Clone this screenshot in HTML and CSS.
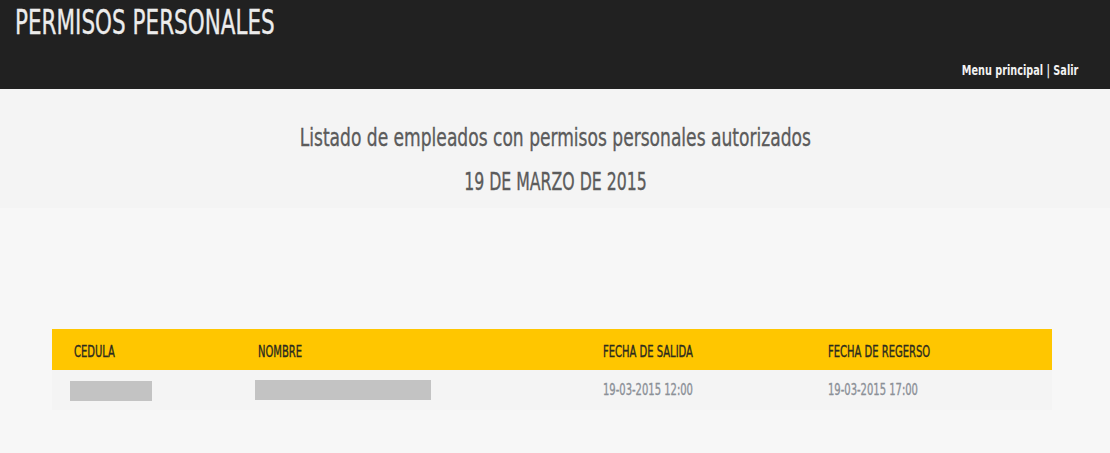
FILE: index.html
```html
<!DOCTYPE html>
<html lang="es">
<head>
<meta charset="utf-8">
<title>Permisos personales</title>
<link rel="stylesheet" href="styles.css">
</head>
<body>
<header class="topbar">
  <h1 class="brand"><span class="nx nx-left">PERMISOS PERSONALES</span></h1>
  <nav class="topnav"><span class="nx nx-right"><a href="#">Menu principal</a> | <a href="#">Salir</a></span></nav>
</header>
<section class="intro">
  <h2 class="intro-title"><span class="nx">Listado de empleados con permisos personales autorizados</span></h2>
  <h3 class="intro-date"><span class="nx">19 DE MARZO DE 2015</span></h3>
</section>
<main class="content">
  <table class="grid">
    <thead>
      <tr>
        <th class="c-ced"><span class="nx nx-left">CEDULA</span></th>
        <th class="c-nom"><span class="nx nx-left">NOMBRE</span></th>
        <th class="c-sal"><span class="nx nx-left">FECHA DE SALIDA</span></th>
        <th class="c-reg"><span class="nx nx-left">FECHA DE REGERSO</span></th>
      </tr>
    </thead>
    <tbody>
      <tr>
        <td><span class="redact redact-ced"></span></td>
        <td><span class="redact redact-nom"></span></td>
        <td><span class="nx nx-left">19-03-2015 12:00</span></td>
        <td><span class="nx nx-left">19-03-2015 17:00</span></td>
      </tr>
    </tbody>
  </table>
</main>
</body>
</html>
```
FILE: styles.css
```css
* { box-sizing: border-box; }
html, body { margin: 0; padding: 0; }
body {
  background: #f7f7f7;
  font-family: "DejaVu Sans Condensed", "Liberation Sans", sans-serif;
  height: 453px;
  overflow: hidden;
}
.nx {
  display: inline-block;
  white-space: nowrap;
  transform: scaleX(0.74);
  transform-origin: center;
  -webkit-text-stroke: 0.35px currentColor;
}
.nx-left { transform-origin: left center; }
.nx-right { transform-origin: right center; }
.topbar {
  background: #212121;
  height: 89px;
  padding: 0 32px 0 15px;
  display: flex;
  flex-direction: column;
}
.brand {
  margin: 0;
  padding-top: 5px;
  font-size: 33px;
  font-weight: normal;
  color: #ececec;
  line-height: 36px;
}
.brand .nx { transform: scaleX(0.725); }
.topnav {
  margin-top: 21px;
  align-self: flex-end;
  color: #f2f2f2;
  font-size: 14px;
  font-weight: bold;
}
.topnav .nx { -webkit-text-stroke: 0; transform: scaleX(0.77); transform-origin: right center; }
.topnav a { color: #f2f2f2; text-decoration: none; }
.intro {
  background: #f4f4f4;
  height: 119px;
  text-align: center;
  padding-top: 34px;
  color: #5b5b5b;
}
.intro-title {
  margin: 0;
  font-size: 25px;
  font-weight: normal;
  line-height: 30px;
}
.intro-title .nx { transform: scaleX(0.76); }
.intro-date {
  margin: 14px 0 0;
  font-size: 25px;
  font-weight: normal;
  line-height: 30px;
}
.intro-date .nx { transform: scaleX(0.70); }
.content {
  padding: 121px 58px 0 52px;
}
.grid {
  width: 1000px;
  border-collapse: collapse;
}
.grid th {
  background: #ffc600;
  color: #2b2b1f;
  font-weight: normal;
  font-size: 15px;
  text-align: left;
  height: 41px;
  padding: 4px 0 0 22px;
}
.grid td {
  background: #f4f4f4;
  color: #8b9097;
  font-size: 15px;
  height: 40px;
  padding: 0 0 0 22px;
  vertical-align: middle;
}
.c-ced { width: 184px; }
.c-nom { width: 345px; }
.c-sal { width: 225px; }
.redact { display: block; background: #c3c3c3; height: 20px; }
.redact-ced { width: 82px; margin-left: -4px; margin-top: 2px; }
.redact-nom { width: 176px; margin-left: -3px; }
```
